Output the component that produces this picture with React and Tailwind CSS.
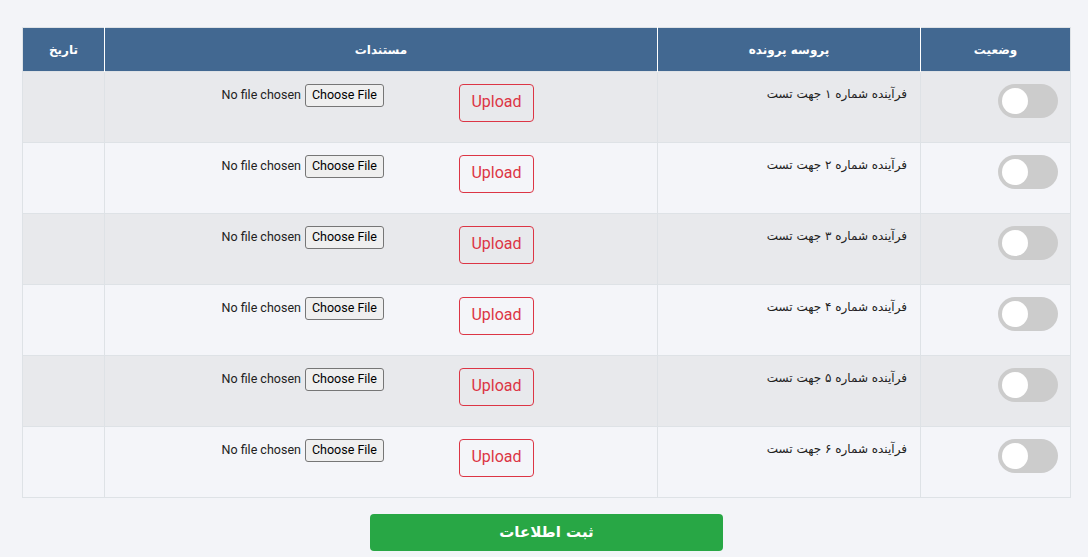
import React from 'react';

const rows = ['۱', '۲', '۳', '۴', '۵', '۶'];

const fa = { fontFamily: '"DejaVu Sans", "Noto Sans", sans-serif' };

const Toggle = () => (
    <div className="flex h-[34px] w-[60px] items-center rounded-full bg-[#cccccc] px-[4px]" dir="ltr">
        <div className="h-[26px] w-[26px] rounded-full bg-white" />
    </div>
);

const FileCell = () => (
    <div className="flex flex-row items-start pr-[123px]" dir="rtl">
        <button className="h-[38px] w-[75px] rounded-[4px] border border-[#dc3545] pb-[3px] text-[16px] text-[#dc3545] font-['Roboto',sans-serif]">
            Upload
        </button>
        <div className="mr-[75px] flex items-center gap-[4px] font-['Roboto',sans-serif] text-[12.5px] text-[#222]" dir="ltr">
            <span>No file chosen</span>
            <span className="flex h-[23px] items-center rounded-[3px] border border-[#767676] bg-[#efefef] px-[6px] text-black">Choose File</span>
        </div>
    </div>
);

export default function App() {
    return (
        <div className="min-h-[557px] bg-[#f3f4f8] pl-[22px] pr-[17px] pt-[27px]" dir="rtl">
            <table className="w-full border-collapse border border-[#dee2e6] text-[12px]" style={fa}>
                <thead>
                    <tr className="h-[44px] bg-[#426891] text-white">
                        <th className="w-[150px] border-l border-white text-center font-bold">وضعیت</th>
                        <th className="w-[263px] border-l border-white text-center font-bold">پروسه پرونده</th>
                        <th className="w-[553px] border-l border-white text-center font-bold">مستندات</th>
                        <th className="text-center font-bold">تاریخ</th>
                    </tr>
                </thead>
                <tbody>
                    {rows.map((n, i) => (
                        <tr key={n} className={`h-[71px] ${i % 2 === 0 ? 'bg-[#e8e9ec]' : 'bg-[#f4f5f9]'}`}>
                            <td className="border border-[#dee2e6] px-[12px] pt-[12px] align-top">
                                <Toggle />
                            </td>
                            <td className="border border-[#dee2e6] px-[13px] pt-[13px] align-top text-[#222]">
                                فرآینده شماره {n} جهت تست
                            </td>
                            <td className="border border-[#dee2e6] pt-[12px] align-top">
                                <FileCell />
                            </td>
                            <td className="border border-[#dee2e6]" />
                        </tr>
                    ))}
                </tbody>
            </table>
            <div className="flex justify-center pt-[16px]">
                <button className="h-[37px] w-[353px] rounded-[4px] bg-[#28a745] text-[15px] font-bold text-white" style={fa}>
                    ثبت اطلاعات
                </button>
            </div>
        </div>
    );
}
